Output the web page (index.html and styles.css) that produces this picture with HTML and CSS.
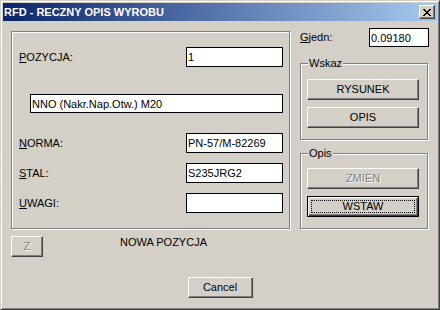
FILE: index.html
```html
<!DOCTYPE html>
<html lang="pl">
<head>
    <meta charset="UTF-8">
    <meta name="viewport" content="width=device-width, initial-scale=1.0">
    <title>RFD - Reczny opis wyrobu</title>
    <link rel="stylesheet" href="styles.css">
</head>
<body>
    <div class="window">
        <div class="titlebar">
            <span class="title">RFD - RECZNY OPIS WYROBU</span>
            <button class="close" title="Zamknij">
                <svg width="8" height="7" viewBox="0 0 8 7" shape-rendering="crispEdges">
                    <path d="M0 0h2v1H0z M6 0h2v1H6z M1 1h2v1H1z M5 1h2v1H5z M2 2h4v1H2z M3 3h2v1H3z M2 4h4v1H2z M1 5h2v1H1z M5 5h2v1H5z M0 6h2v1H0z M6 6h2v1H6z" fill="#000"/>
                </svg>
            </button>
        </div>

        <div class="content">
            <div class="main">
                <div class="panel">
                    <div class="row pozycja">
                        <label><u>P</u>OZYCJA:</label>
                        <input class="field" value="1">
                    </div>
                    <div class="row desc">
                        <input class="field wide" value="NNO (Nakr.Nap.Otw.) M20">
                    </div>
                    <div class="row norma">
                        <label><u>N</u>ORMA:</label>
                        <input class="field" value="PN-57/M-82269">
                    </div>
                    <div class="row">
                        <label><u>S</u>TAL:</label>
                        <input class="field" value="S235JRG2">
                    </div>
                    <div class="row">
                        <label><u>U</u>WAGI:</label>
                        <input class="field" value="">
                    </div>
                </div>

                <div class="side">
                    <div class="row jedn">
                        <label><u>G</u>jedn:</label>
                        <input class="field small" value="0.09180">
                    </div>
                    <div class="group wskaz">
                        <span class="legend">Wskaz</span>
                        <button class="btn">RYSUNEK</button>
                        <button class="btn">OPIS</button>
                    </div>
                    <div class="group opis">
                        <span class="legend">Opis</span>
                        <button class="btn" disabled>ZMIEN</button>
                        <button class="btn default">WSTAW</button>
                    </div>
                </div>
            </div>

            <div class="status">
                <button class="btn z" disabled>Z</button>
                <span class="status-text">NOWA POZYCJA</span>
            </div>

            <div class="footer">
                <button class="btn cancel">Cancel</button>
            </div>
        </div>
    </div>
</body>
</html>
```

FILE: styles.css
```css
* {
    box-sizing: border-box;
}

body {
    margin: 0;
    font-family: "Liberation Sans", Arial, sans-serif;
    font-size: 11px;
    line-height: 13px;
    color: #000;
    background: #D4D0C8;
}

.window {
    width: 440px;
    height: 310px;
    background: #D4D0C8;
    border: 1px solid;
    border-color: #D4D0C8 #404040 #404040 #D4D0C8;
    box-shadow: inset 1px 1px #fff, inset -1px -1px #808080;
    padding: 2px;
}

.titlebar {
    height: 18px;
    background: linear-gradient(to right, #0A246A, #A6CAF0);
    display: flex;
    align-items: center;
    justify-content: space-between;
    padding: 0 2px 0 1px;
}

.title {
    color: #fff;
    font-weight: bold;
    font-size: 11px;
}

.close {
    width: 16px;
    height: 14px;
    padding: 3px 0 0 3px;
    display: flex;
    align-items: flex-start;
    background: #D4D0C8;
    border: 1px solid;
    border-color: #fff #404040 #404040 #fff;
    box-shadow: inset -1px -1px #808080;
}

.close svg {
    display: block;
}

.content {
    padding: 7px 8px 0 8px;
}

.main {
    display: grid;
    grid-template-columns: 279px 129px;
    column-gap: 10px;
    align-items: start;
}

/* ramka wklesla */
.panel,
.group {
    border: 1px solid #808080;
    box-shadow: 1px 1px 0 #fff, inset 1px 1px 0 #fff;
}

.panel {
    margin-top: 3px;
    height: 198px;
    padding: 15px 6px 0 7px;
}

.row {
    display: flex;
    justify-content: space-between;
    align-items: center;
    height: 20px;
}

.row + .row {
    margin-top: 10px;
}

.row.desc {
    margin-top: 27px;
    height: 19px;
    justify-content: flex-end;
}

.row.norma {
    margin-top: 20px;
}

.field {
    font: inherit;
    color: #000;
    width: 97px;
    height: 20px;
    padding: 0 1px;
    border: 1px solid #000;
    background: #fff;
    outline: none;
}

.field.wide {
    width: 253px;
    height: 19px;
}

.field.small {
    width: 60px;
    height: 19px;
}

.side {
    display: flex;
    flex-direction: column;
}

.row.jedn {
    height: 19px;
}

.group {
    position: relative;
    width: 128px;
    display: flex;
    flex-direction: column;
    gap: 7px;
    padding: 15px 8px 11px 6px;
}

.wskaz {
    margin-top: 16px;
}

.opis {
    margin-top: 13px;
    padding-top: 14px;
}

.legend {
    position: absolute;
    top: -7px;
    left: 7px;
    padding: 0 1px;
    background: #D4D0C8;
}

.btn {
    font: inherit;
    color: #000;
    height: 21px;
    padding: 0;
    background: #D4D0C8;
    border: 1px solid;
    border-color: #fff #404040 #404040 #fff;
    box-shadow: inset -1px -1px #808080;
}

.btn:disabled {
    color: #808080;
    text-shadow: 1px 1px 0 #fff;
}

.btn.default {
    border: 1px solid #000;
    box-shadow: inset 1px 1px #fff, inset -1px -1px #404040, inset -2px -2px #808080;
    outline: 1px dotted #000;
    outline-offset: -5px;
}

.status {
    display: flex;
    align-items: flex-start;
    margin-top: 7px;
}

.btn.z {
    width: 32px;
}

.status-text {
    margin-left: 77px;
}

.footer {
    display: flex;
    justify-content: center;
    margin-top: 20px;
}

.btn.cancel {
    width: 65px;
}
```
